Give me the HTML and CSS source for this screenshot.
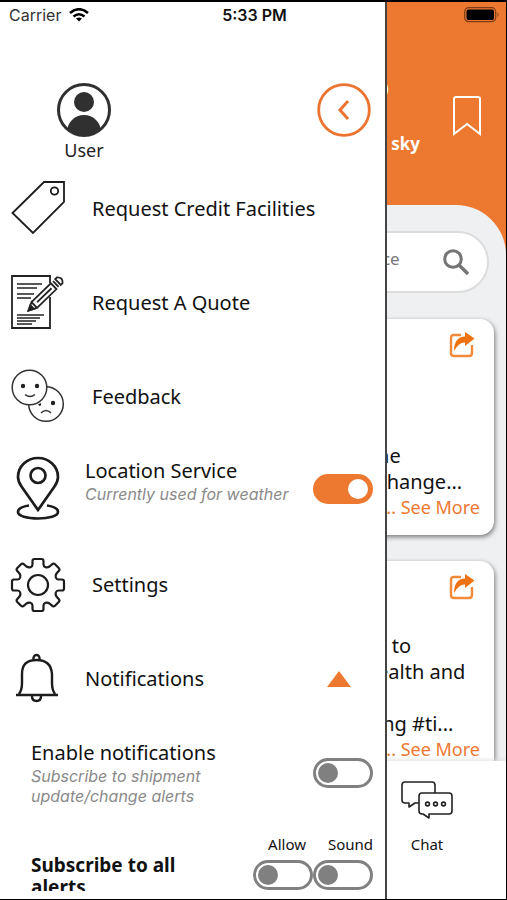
FILE: index.html
```html
<!DOCTYPE html>
<html lang="en">
<head>
<meta charset="utf-8">
<meta name="viewport" content="width=device-width, initial-scale=1">
<title>Menu</title>
<link rel="stylesheet" href="styles.css">
</head>
<body>
<div class="phone">
  <main class="home">
    <header class="hero">
      <div class="weather">
        <span class="temp">0</span>
        <span class="sky">Clear sky</span>
      </div>
      <button class="icon-button" type="button" aria-label="Bookmarks">
        <svg width="30" height="42" viewBox="0 0 30 42" fill="none" stroke="#fff" stroke-width="2"><path d="M2 39V4q0-2 2-2h22q2 0 2 2v35L15 29z"/></svg>
      </button>
    </header>
    <div class="sheet">
      <form class="search">
        <input class="search-input" type="text" aria-label="Search" placeholder="Service">
        <button class="icon-button" type="button" aria-label="Search">
          <svg width="26" height="26" viewBox="0 0 26 26" fill="none" stroke="#757575"><circle cx="10" cy="10" r="8.300" stroke-width="3"/><path d="M16 16l9 9" stroke-width="3.400"/></svg>
        </button>
      </form>
      <article class="card">
        <button class="icon-button share" type="button" aria-label="Share">
          <svg width="26" height="26" viewBox="0 0 26 26"><path d="M12 3H5Q2 3 2 6v15q0 3 3 3h15q3 0 3-3v-8" fill="none" stroke="#f28a3a" stroke-width="2.400"/><path d="M16 0l9.500 6.500L16 14v-3.500Q10 10 5 19 5 5 16 4.500z" fill="#ee7210"/></svg>
        </button>
        <p class="card-text">he<br>change...</p>
        <a class="more" href="#">... See More</a>
      </article>
      <article class="card">
        <button class="icon-button share" type="button" aria-label="Share">
          <svg width="26" height="26" viewBox="0 0 26 26"><path d="M12 3H5Q2 3 2 6v15q0 3 3 3h15q3 0 3-3v-8" fill="none" stroke="#f28a3a" stroke-width="2.400"/><path d="M16 0l9.500 6.500L16 14v-3.500Q10 10 5 19 5 5 16 4.500z" fill="#ee7210"/></svg>
        </button>
        <p class="card-text">s to<br>ealth and<br><br>ing #ti...</p>
        <a class="more" href="#">... See More</a>
      </article>
    </div>
    <nav class="tabs">
      <a class="tab" href="#">
        <svg width="52" height="38" viewBox="0 0 52 38" fill="none" stroke="#222" stroke-width="1.6" stroke-linejoin="round"><path d="M18 22h-4l-6 4v-4H4q-3 0-3-3V4q0-3 3-3h27q3 0 3 3v8"/><path d="M21 12h27q3 0 3 3v15q0 3-3 3H28v4l-6-4h-1q-3 0-3-3V15q0-3 3-3z"/><circle cx="26.500" cy="23" r="1.900"/><circle cx="34.500" cy="23" r="1.900"/><circle cx="42.500" cy="23" r="1.900"/></svg>
        <span>Chat</span>
      </a>
    </nav>
  </main>

  <aside class="drawer">
    <header class="drawer-head">
      <div class="user">
        <svg width="54" height="54" viewBox="0 0 54 54"><defs><clipPath id="avatar"><circle cx="27" cy="27" r="26"/></clipPath></defs><circle cx="27" cy="27" r="25.500" fill="#fff" stroke="#303030" stroke-width="3"/><circle cx="27" cy="19" r="10" fill="#303030"/><ellipse cx="27" cy="49" rx="17" ry="17" fill="#303030" clip-path="url(#avatar)"/></svg>
        <span>User</span>
      </div>
      <button class="icon-button" type="button" aria-label="Close menu">
        <svg width="54" height="54" viewBox="0 0 54 54" fill="none" stroke="#ed7430" stroke-width="2.800"><circle cx="27" cy="27" r="25.300"/><path d="M31 18l-8 9 8 9" stroke-width="3"/></svg>
      </button>
    </header>
    <div class="menu">
      <a class="row" href="#">
        <svg class="icon" viewBox="0 0 54 54" fill="none" stroke="#1c1c1c" stroke-width="1.800"><path d="M33 0h20v20L22 51 1.500 31z"/><circle cx="43.500" cy="9" r="3.700"/></svg>
        <span>Request Credit Facilities</span>
      </a>
      <a class="row" href="#">
        <svg class="icon" viewBox="0 0 54 54" fill="none" stroke="#222" stroke-width="1.800"><path d="M39 7V0H1v52h38V21"/><path d="M6 8h25M6 12h20M6 18h17M6 22h14M6 39h27M6 42h23M6 45h19M6 48h15" stroke-width="1.300"/><g transform="translate(17.500 34.500) rotate(-44)"><path d="M0 0l8-4v8zM8-4h27v8H8M12 0h20M38-4v8M41-4v8h2.500q4.500-4 0-8zM41-4h3" stroke-width="1.800" fill="#fff"/><path d="M0 0l5-2.500v5z" fill="#222"/></g></svg>
        <span>Request A Quote</span>
      </a>
      <a class="row" href="#">
        <svg class="icon" viewBox="0 0 54 54" fill="none" stroke="#333" stroke-width="1.500"><circle cx="35" cy="34" r="17.300"/><circle cx="18.500" cy="17.500" r="17.300" fill="#fff"/><g fill="#222" stroke="none"><circle cx="12" cy="16" r="2.200"/><circle cx="26" cy="16" r="2.200"/><circle cx="42" cy="33" r="2.200"/><path d="M27 34.500l3-1.500q.5 3-1.500 3z"/></g><path d="M14 24.500q5 4 10 0M30 43q5-5 10 0"/></svg>
        <span>Feedback</span>
      </a>
      <div class="row near location">
        <svg class="icon tall" viewBox="0 0 54 64" fill="none" stroke="#1c1c1c" stroke-width="2.700"><path d="M27 53L10.500 29.500Q7 24.500 7 20a20 19 0 0 1 40 0Q47 24.500 43.500 29.500z"/><circle cx="27" cy="18.500" r="7.500"/><path d="M18 48.500C11 49.500 7 52 7 55c0 4 9 6.500 20 6.500S47 59 47 55c0-3-4-5.500-11-6.500"/></svg>
        <label class="text raised" for="location">Location Service<small>Currently used for weather</small></label>
        <input class="switch" id="location" type="checkbox" checked>
      </div>
      <a class="row" href="#">
        <svg class="icon" viewBox="0 0 54 54" fill="none" stroke="#1c1c1c" stroke-width="2.200" stroke-linejoin="round"><path d="M19.500 9.200Q21.500 8.500 21.500 6.500V3q0-2 2-2h7q2 0 2 2v3.500q0 2 2 2.700t4-.7l2.500-2.200q1.500-1.500 3 0l3.700 3.700q1.500 1.500 0 3l-2.200 2.500q-1.400 2-.7 4t2.700 2H51q2 0 2 2v7q0 2-2 2h-3.500q-2 0-2.700 2t.7 4l2.200 2.500q1.500 1.500 0 3L44 47.700q-1.500 1.500-3 0l-2.500-2.200q-2-1.400-4-.7t-2 2.700V51q0 2-2 2h-7q-2 0-2-2v-3.500q0-2-2-2.700t-4 .7L13 47.700q-1.500 1.500-3 0L6.300 44q-1.500-1.500 0-3l2.200-2.500q1.400-2 .7-4t-2.700-2H3q-2 0-2-2v-7q0-2 2-2h3.500q2 0 2.700-2t-.7-4L6.300 13q-1.500-1.500 0-3L10 6.300q1.500-1.500 3 0l2.500 2.200q2 1.400 4 .7z"/><circle cx="27" cy="27" r="10"/></svg>
        <span>Settings</span>
      </a>
      <button class="row near" type="button" aria-expanded="true">
        <svg class="icon" viewBox="0 0 54 54" fill="none" stroke="#1c1c1c" stroke-width="2.400"><path d="M22.500 8q-.5-5 3-5t3 5"/><path d="M5 43h42M8 42q3-4 3-11v-9Q11 8 25.500 8T41 22v9q0 7 3 11"/><path d="M21 44q0 5 4.500 5t4.500-5"/></svg>
        <span class="text">Notifications</span>
        <span class="caret"></span>
      </button>
      <div class="row sub">
        <label class="text" for="enable">Enable notifications<small>Subscribe to shipment update/change alerts</small></label>
        <input class="switch" id="enable" type="checkbox">
      </div>
      <div class="row sub all">
        <strong class="text">Subscribe to all alerts</strong>
        <div class="options">
          <div class="option-labels"><label for="allow">Allow</label><label for="sound">Sound</label></div>
          <div class="option-switches"><input class="switch" id="allow" type="checkbox"><input class="switch" id="sound" type="checkbox"></div>
        </div>
      </div>
    </div>
  </aside>

  <div class="status">
    <span class="carrier">Carrier
      <svg width="20" height="14" viewBox="0 0 20 14" fill="none" stroke="#000" stroke-width="2.600"><path d="M1 5Q10-2.500 19 5M4.500 8.500Q10 4 15.500 8.500"/><path d="M7 10.500q3-2 6 0l-3 3z" fill="#000" stroke="none"/></svg>
    </span>
    <time class="time">5:33 PM</time>
    <svg class="battery" width="36" height="16" viewBox="0 0 36 16"><rect x=".7" y=".7" width="31" height="14" rx="4" fill="none" stroke="#7c3c18" stroke-width="1.200"/><rect x="2.500" y="2.500" width="27.500" height="10.500" rx="2" fill="#000"/><path d="M33.500 5.500q2 2 0 4.500z" fill="#7c3c18"/></svg>
  </div>
</div>
</body>
</html>
```
FILE: styles.css
```css
* { box-sizing: border-box; }

body {
  margin: 0;
  font-family: "Noto Sans", "Open Sans", sans-serif;
  font-size: 20px;
  line-height: 26px;
  color: #111;
}

a { color: inherit; text-decoration: none; }

button, input { font: inherit; color: inherit; margin: 0; }

svg { display: block; flex: none; }

.icon-button { display: block; flex: none; padding: 0; border: 0; background: none; }

.phone {
  position: relative;
  height: 100vh;
  overflow: hidden;
  border: solid #000;
  border-width: 2px 1px 1px 0;
  background: #fff;
}

/* Status bar, drawn over the drawer and the home screen */
.status {
  position: absolute;
  inset: 0 0 auto 0;
  display: grid;
  grid-template-columns: 1fr auto 1fr;
  align-items: center;
  height: 26px;
  padding: 0 6px 0 9px;
  font-family: Inter, sans-serif;
  font-size: 16px;
}
.carrier { display: flex; align-items: center; gap: 8px; color: #333; }
.time { font-weight: 600; }
.battery { justify-self: end; }

/* Home screen */
.home { display: flex; flex-direction: column; height: 100%; background: #ed7931; }

.hero {
  display: flex;
  justify-content: flex-end;
  align-items: flex-end;
  gap: 32px;
  height: 203px;
  padding: 0 24px 48px 0;
  color: #fff;
}
.hero .icon-button { padding-bottom: 20px; }
.weather { display: flex; flex-direction: column; font-size: 17px; font-weight: 700; }
.temp { padding-bottom: 28px; padding-left: 36px; }

.sheet {
  flex: 1;
  min-height: 0;
  overflow: hidden;
  padding: 26px 12px 0;
  border-radius: 0 50px 0 0;
  background: #eef0f2;
}

.search {
  display: flex;
  align-items: center;
  height: 62px;
  margin: 0 5px 26px;
  padding-right: 18px;
  border: 2px solid #dcdcdc;
  border-radius: 31px;
  background: #fff;
}
.search-input {
  flex: 1;
  min-width: 0;
  padding: 0 0 6px 72%;
  border: 0;
  background: none;
  font-size: 17px;
}
.search-input::placeholder { color: #777; }

.card {
  display: flex;
  flex-direction: column;
  margin-bottom: 26px;
  padding: 13px 14px 14px 0;
  border-radius: 14px;
  background: #fff;
  box-shadow: 1px 2px 5px #777;
}
.share { align-self: flex-end; margin-right: 5px; }
.card-text { margin: 85px 0 0; padding-left: 78%; white-space: nowrap; }
.card + .card .card-text { margin-top: 33px; }
.more { align-self: flex-end; font-size: 18px; line-height: 24px; padding-bottom: 2px; color: #ed7931; }

.tabs {
  display: flex;
  justify-content: flex-end;
  height: 138px;
  background: #fff;
  box-shadow: 0 -1px 4px #ddd;
}
.tab {
  display: flex;
  flex-direction: column;
  align-items: center;
  gap: 12px;
  width: 158px;
  padding-top: 20px;
  font-size: 15px;
}

/* Drawer */
.drawer {
  position: absolute;
  inset: 0 auto 0 0;
  display: flex;
  flex-direction: column;
  width: 76.5%;
  border-right: 2px solid #444;
  background: #fff;
  padding-bottom: 8px;
}
.drawer-head {
  display: flex;
  justify-content: space-between;
  align-items: flex-start;
  height: 160px;
  padding: 81px 14px 0 57px;
}
.user { display: flex; flex-direction: column; align-items: center; font-size: 18px; color: #222; }

.menu { flex: 1; min-height: 0; overflow: hidden; }

.row {
  display: flex;
  align-items: center;
  gap: 27px;
  width: 100%;
  height: 94px;
  padding: 0 12px 0 11px;
  border: 0;
  background: none;
  text-align: left;
}
.near { gap: 20px; }
.location { padding-bottom: 4px; }
.icon { width: 54px; height: 54px; overflow: visible; }
.tall { height: 64px; }
.text { flex: 1; }
.raised { padding-bottom: 16px; }
.text small {
  display: block;
  font-family: Inter, sans-serif;
  font-size: 16px;
  font-style: italic;
  line-height: 20px;
  color: #8a8a8a;
}

.caret {
  margin-right: 22px;
  border: solid transparent;
  border-width: 0 12px 16px;
  border-bottom-color: #ed7931;
}

.sub { padding-left: 31px; }
.all { align-items: flex-start; justify-content: space-between; height: auto; padding-top: 11px; }
.all .text { flex: 0 1 160px; padding-top: 23px; font-size: 19px; line-height: 22px; }
.option-labels { display: flex; justify-content: flex-end; gap: 22px; font-size: 15px; }
.option-switches { display: flex; padding-top: 3px; }

.switch {
  appearance: none;
  display: flex;
  align-items: center;
  flex: none;
  width: 60px;
  height: 30px;
  padding: 0 2px;
  border: 3px solid #808080;
  border-radius: 15px;
  background: #fff;
}
.switch::before {
  content: "";
  width: 20px;
  height: 20px;
  border-radius: 50%;
  background: #808080;
}
.switch:checked { justify-content: flex-end; border-color: #ed7931; background: #ed7931; }
.switch:checked::before { background: #fff; }
```
